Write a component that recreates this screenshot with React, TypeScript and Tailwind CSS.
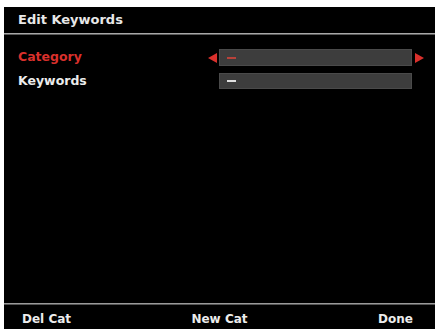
import React from "react";

const font = { fontFamily: '"DejaVu Sans", Verdana, sans-serif' };

function LeftArrow() {
  return (
    <svg width="9" height="10" viewBox="0 0 9 10" className="block">
      <polygon points="9,0 9,10 0,5" fill="#d9302c" />
    </svg>
  );
}
function RightArrow() {
  return (
    <svg width="9" height="10" viewBox="0 0 9 10" className="block">
      <polygon points="0,0 0,10 9,5" fill="#d9302c" />
    </svg>
  );
}

export default function App() {
  return (
    <div className="w-[437px] h-[329px] bg-white overflow-hidden" style={font}>
      <div className="ml-[4px] mr-[2px] mt-[7px] h-[322px] bg-black flex flex-col">
        <div className="h-[26px] flex items-center pl-[14px] text-[13px] font-bold text-[#e8e8e8]">
          Edit Keywords
        </div>
        <div className="h-[1px] bg-[#a8a8a8]" />
        <div className="h-[1px] bg-[#5a5a5a]" />
        <div className="flex-1 pt-[14px] pl-[14px] flex flex-col gap-[7px]">
          <div className="h-[17px] flex items-center">
            <div className="w-[190px] text-[12.5px] font-bold text-[#d9302c]">Category</div>
            <div className="w-[11px]"><LeftArrow /></div>
            <div className="w-[193px] h-[17px] bg-[#3d3d3d] border border-[#4a4a4a] flex items-center pl-[7px]">
              <div className="w-[9px] h-[2px] bg-[#b8423a]" />
            </div>
            <div className="ml-[3px]"><RightArrow /></div>
          </div>
          <div className="h-[16px] flex items-center">
            <div className="w-[190px] text-[12.5px] font-bold text-[#ececec]">Keywords</div>
            <div className="w-[11px]" />
            <div className="w-[193px] h-[16px] bg-[#3d3d3d] border border-[#4a4a4a] flex items-center pl-[7px]">
              <div className="w-[9px] h-[2px] bg-[#e0e0e0]" />
            </div>
          </div>
        </div>
        <div className="h-[1px] bg-[#9a9a9a]" />
        <div className="h-[1px] bg-[#555]" />
        <div className="h-[24px] grid grid-cols-3 items-start pt-[6px] leading-[16px] text-[12px] font-bold text-[#ececec]">
          <div className="pl-[18px]">Del Cat</div>
          <div className="text-center">New Cat</div>
          <div className="text-right pr-[22px]">Done</div>
        </div>
      </div>
    </div>
  );
}
